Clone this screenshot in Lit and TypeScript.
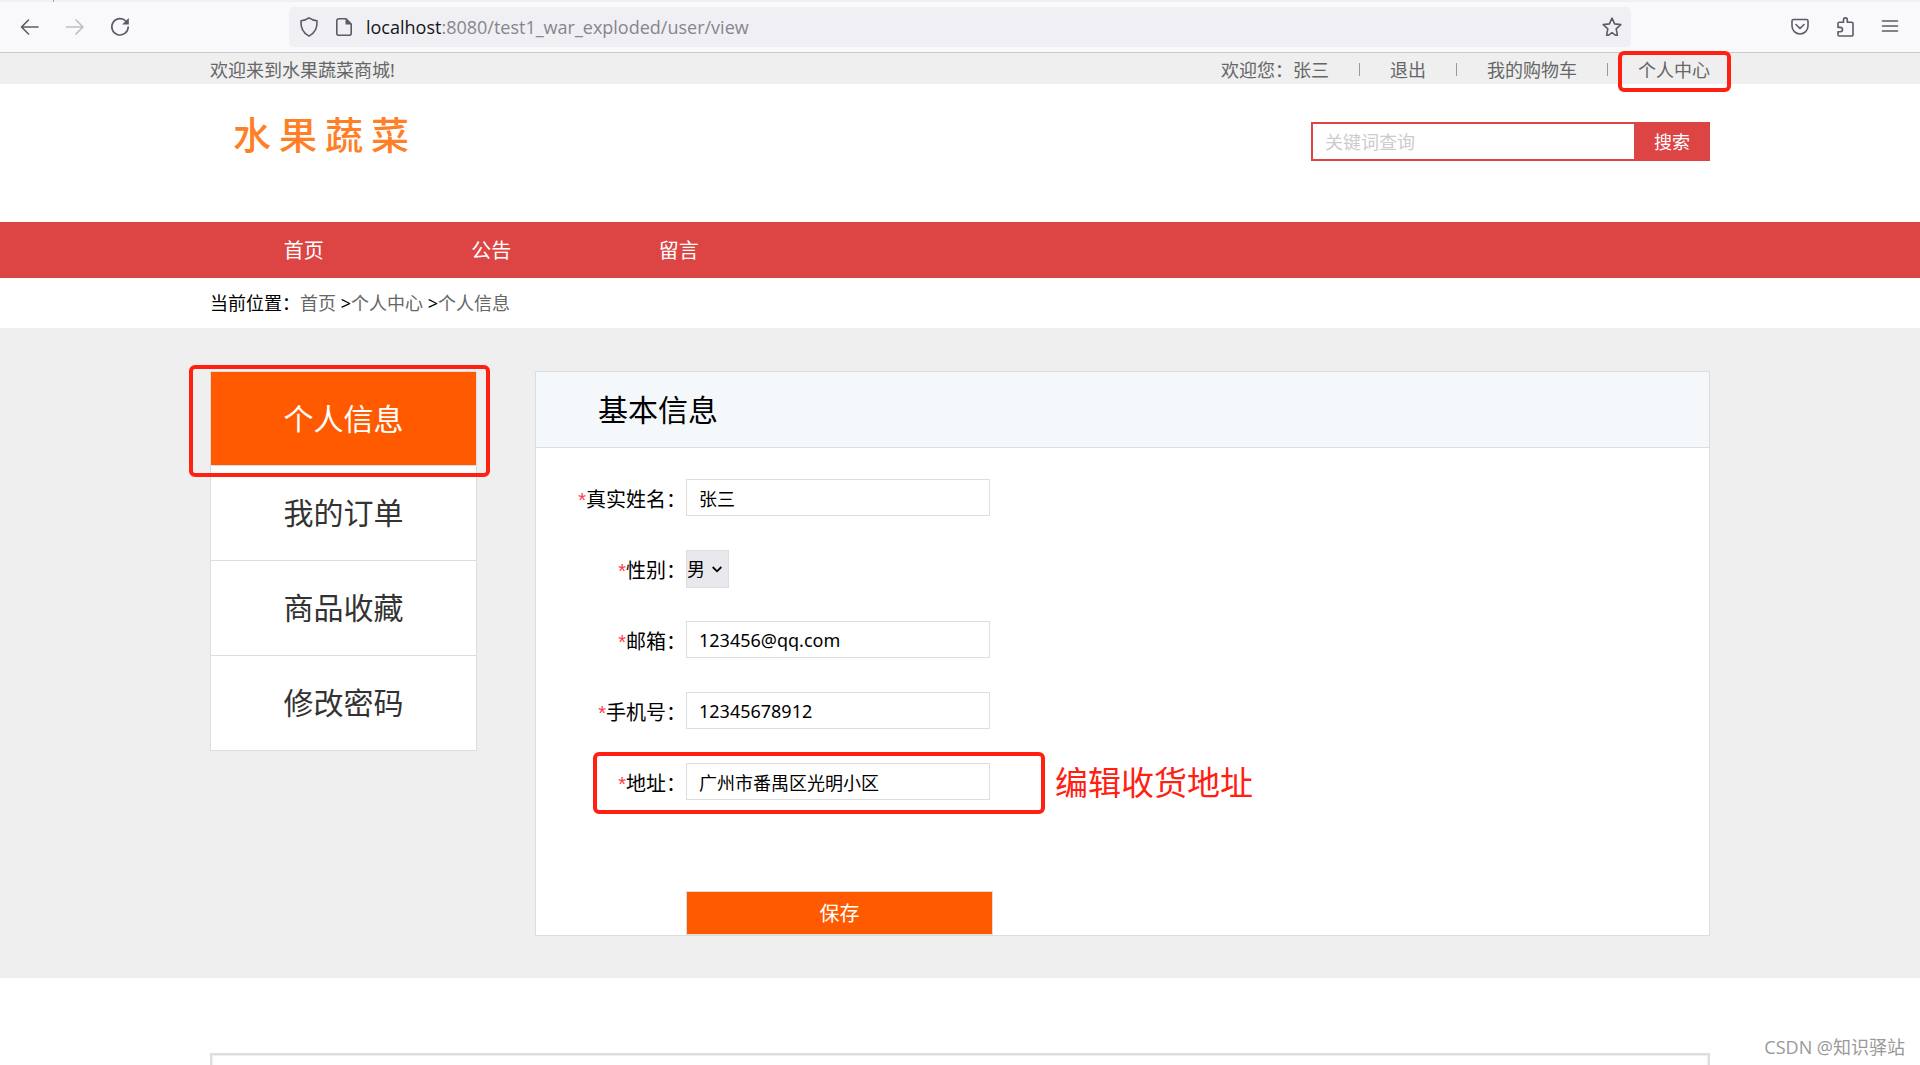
import { LitElement, html, css, svg } from "lit";
import { customElement, property } from "lit/decorators.js";
import { classMap } from "lit/directives/class-map.js";

const ICONS: Record<string, unknown> = {
  back: svg`<path d="M18 10H1.5M8.5 3L1.5 10l7 7"/>`,
  forward: svg`<path d="M1.500 10H18M11 3l7 7-7 7"/>`,
  reload: svg`<path d="M16 4.200A8.200 8.200 0 1 0 18.200 10"/><path class="solid" d="M18.800 1v6.600h-6.600z"/>`,
  shield: svg`<path d="M10 .9c2.300 1.700 5 2.600 8 2.800.400 6.300-1.200 11.800-8 15.400C3.200 15.500 1.600 10 2 3.700 5 3.500 7.700 2.600 10 .9z"/>`,
  page: svg`<path d="M12 1.800H4.800a2 2 0 0 0-2 2v12.400a2 2 0 0 0 2 2h10.400a2 2 0 0 0 2-2V7z"/><path class="solid" d="M11.500 1.500V7.500H17.500z"/>`,
  star: svg`<path d="M10 1.200l2.600 5.700 6.200.7-4.600 4.200 1.200 6.400-1.700.1L10 15.700l-3.700 2.600-1.700-.1 1.200-6.400-4.600-4.200 6.200-.7z"/>`,
  pocket: svg`<path d="M3.500 2.500h13a1.500 1.500 0 0 1 1.500 1.500v5a8 8 0 0 1-16 0V4a1.500 1.500 0 0 1 1.500-1.500z"/><path d="M6 7.500l4 4 4-4"/>`,
  extension: svg`<path d="M3 6.500a1.200 1.200 0 0 1 1.200-1.200H8.500V2.800a1.900 1.900 0 0 1 3.800 0V5.300h4.500A1.200 1.200 0 0 1 18 6.500v11.300a1.200 1.200 0 0 1-1.200 1.200H4.200A1.200 1.200 0 0 1 3 17.800V14.800h2.300a2.200 2.200 0 0 0 0-4.400H3z"/>`,
  menu: svg`<path d="M2.500 4h15M2.500 9h15M2.500 14h15"/>`,
};

@customElement("line-icon")
export class LineIcon extends LitElement {
  @property() name = "";

  static styles = css`
    :host {
      display: block;
      width: 20px;
      height: 20px;
    }
    .glyph {
      display: block;
      width: 100%;
      height: 100%;
      fill: none;
      stroke: currentColor;
      stroke-width: 1.6;
      stroke-linecap: round;
      stroke-linejoin: round;
      overflow: visible;
    }
    .solid {
      fill: currentColor;
      stroke: none;
    }
  `;

  render() {
    return html`<svg class="glyph" viewBox="0 0 20 20" aria-hidden="true">${ICONS[this.name]}</svg>`;
  }
}

@customElement("browser-bar")
export class BrowserBar extends LitElement {
  static styles = css`
    :host {
      display: block;
    }
    .bar {
      display: flex;
      align-items: center;
      box-sizing: border-box;
      height: 53px;
      padding: 2px 20px 0;
      background:
        linear-gradient(#a9a9ad, #a9a9ad) 53px 0 / 1px 2px no-repeat,
        linear-gradient(#f0f0f0, #f0f0f0) 0 0 / 100% 2px no-repeat,
        #f9f9fb;
      border-bottom: 1px solid #c9c9cd;
      color: #5b5b66;
    }
    .group {
      display: flex;
      gap: 25px;
    }
    .icon-button {
      display: block;
      padding: 0;
      border: 0;
      background: none;
      color: inherit;
      cursor: pointer;
    }
    .icon-button:disabled {
      color: #bdbdc3;
    }
    .address {
      display: flex;
      flex: 1;
      align-items: center;
      gap: 15px;
      height: 40px;
      margin: 0 159px;
      padding: 0 9px 0 10px;
      border-radius: 5px;
      background: #f0f0f4;
    }
    .url {
      flex: 1;
      margin-left: -3px;
      color: #86868d;
      font-family: "Open Sans", "Noto Sans", sans-serif;
      font-size: 18px;
      line-height: 24px;
    }
    .host {
      color: #15141a;
    }
  `;

  render() {
    return html`
      <div class="bar">
        <div class="group">
          <button class="icon-button" aria-label="后退"><line-icon name="back"></line-icon></button>
          <button class="icon-button" aria-label="前进" disabled><line-icon name="forward"></line-icon></button>
          <button class="icon-button" aria-label="刷新"><line-icon name="reload"></line-icon></button>
        </div>
        <div class="address">
          <line-icon name="shield"></line-icon>
          <line-icon name="page"></line-icon>
          <span class="url"><span class="host">localhost</span>:8080/test1_war_exploded/user/view</span>
          <button class="icon-button" aria-label="收藏"><line-icon name="star"></line-icon></button>
        </div>
        <div class="group">
          <button class="icon-button" aria-label="Pocket"><line-icon name="pocket"></line-icon></button>
          <button class="icon-button" aria-label="扩展"><line-icon name="extension"></line-icon></button>
          <button class="icon-button" aria-label="菜单"><line-icon name="menu"></line-icon></button>
        </div>
      </div>
    `;
  }
}

interface Field {
  id: string;
  label: string;
  value: string;
  options?: string[];
  note?: string;
}

const NAV = ["首页", "公告", "留言"];
const SIDE = ["个人信息", "我的订单", "商品收藏", "修改密码"];
const FIELDS: Field[] = [
  { id: "name", label: "真实姓名：", value: "张三" },
  { id: "gender", label: "性别：", value: "男", options: ["男", "女"] },
  { id: "email", label: "邮箱：", value: "123456@qq.com" },
  { id: "phone", label: "手机号：", value: "12345678912" },
  { id: "address", label: "地址：", value: "广州市番禺区光明小区", note: "编辑收货地址" },
];

@customElement("app-root")
export class AppRoot extends LitElement {
  static styles = css`
    :host {
      display: flex;
      flex-direction: column;
      position: relative;
      min-height: 100vh;
      background: #fff;
      color: #000;
      font-family: "Noto Sans", "Noto Sans CJK SC", sans-serif;
      font-size: 18px;
      line-height: 24px;
    }
    a {
      color: #666;
      text-decoration: none;
    }
    ul {
      margin: 0;
      padding: 0;
      list-style: none;
    }
    input,
    select,
    button {
      box-sizing: border-box;
      margin: 0;
      border-radius: 0;
      color: #000;
      font: inherit;
    }
    .wrap {
      width: min(1500px, 100% - 48px);
      margin: 0 auto;
    }
    .mark {
      position: absolute;
      border: 4px solid #ff2012;
      border-radius: 6px;
      pointer-events: none;
    }

    .topbar {
      background: #efefef;
      color: #666;
    }
    .topbar-row {
      display: flex;
      align-items: center;
      justify-content: space-between;
      box-sizing: border-box;
      height: 31px;
      padding-top: 2px;
    }
    .account {
      display: flex;
      align-items: center;
      gap: 30px;
    }
    .divider {
      width: 1px;
      height: 13px;
      background: #999;
    }
    .marked {
      position: relative;
    }
    .mark-center {
      inset: -7px -21px -10px -20px;
    }

    .header {
      display: flex;
      align-items: flex-start;
      justify-content: space-between;
      box-sizing: border-box;
      height: 138px;
      padding-top: 26px;
    }
    .logo {
      display: flex;
      gap: 8px;
      margin-left: 23px;
      color: #ff7f27;
      font-size: 38px;
      font-weight: 500;
      line-height: 48px;
    }
    .search {
      display: flex;
      width: 399px;
      height: 39px;
      margin-top: 12px;
    }
    .search-input {
      flex: 1;
      min-width: 0;
      padding: 0 12px;
      border: 2px solid #dd4545;
      border-right: 0;
      background: #fff;
      outline: 0;
    }
    .search-input::placeholder {
      color: #ccc;
      opacity: 1;
    }
    .search-button {
      width: 76px;
      padding: 0;
      border: 0;
      background: #dd4545;
      color: #fff;
    }

    .nav {
      background: #dd4545;
    }
    .nav-row {
      display: grid;
      grid-template-columns: repeat(8, 1fr);
    }
    .nav-link {
      display: block;
      padding-top: 2px;
      color: #fff;
      font-size: 20px;
      line-height: 54px;
      text-align: center;
    }
    .crumbs {
      line-height: 50px;
    }

    .body {
      padding: 43px 0 42px;
      background: #efefef;
    }
    .columns {
      display: flex;
      align-items: flex-start;
      gap: 58px;
    }
    .side {
      position: relative;
      flex: 0 0 267px;
      box-sizing: border-box;
      border: 1px solid #ddd;
      border-width: 1px 1px 0;
      background: #fff;
    }
    .side-link {
      display: block;
      border-bottom: 1px solid #ddd;
      color: #333;
      font-size: 30px;
      line-height: 94px;
      text-align: center;
    }
    .side-link.active {
      background: #ff5a00;
      color: #fff;
      line-height: 93px;
    }
    .mark-side {
      inset: -7px -14px auto -22px;
      height: 104px;
    }
    .panel {
      flex: 1;
      border: 1px solid #ddd;
      background: #fff;
    }
    .panel-title {
      margin: 0;
      padding-left: 62px;
      border-bottom: 1px solid #ddd;
      background: #f4f8fb;
      font-size: 30px;
      font-weight: 400;
      line-height: 75px;
    }
    .form {
      display: flex;
      flex-direction: column;
      gap: 34px;
      padding-top: 31px;
    }
    .row {
      position: relative;
      display: grid;
      grid-template-rows: 37px;
      grid-template-columns: 150px 304px 1fr;
    }
    .label {
      padding-top: 5px;
      font-size: 20px;
      line-height: 32px;
      text-align: right;
      white-space: nowrap;
    }
    .star {
      color: #ff3b4a;
      font-family: "Liberation Sans", sans-serif;
    }
    .text {
      width: 100%;
      height: 37px;
      padding: 0 12px;
      border: 1px solid #ddd;
      background: #fff;
      outline: 0;
    }
    .choice {
      position: relative;
      width: 43px;
    }
    .select {
      appearance: none;
      width: 100%;
      height: 38px;
      padding: 0;
      border: 1px solid #ddd;
      background: #e9e9ed;
    }
    .chevron {
      position: absolute;
      top: 16px;
      right: 7px;
      width: 10px;
      height: 7px;
      fill: none;
      stroke: #000;
      stroke-width: 1.8;
      pointer-events: none;
    }
    .mark-address {
      top: -11px;
      left: 57px;
      width: 444px;
      height: 54px;
    }
    .note {
      margin-left: 65px;
      color: #ff2012;
      font-size: 33px;
      line-height: 40px;
      white-space: nowrap;
    }
    .save {
      width: 307px;
      height: 44px;
      margin: 57px 0 0 150px;
      padding: 2px 0 0;
      border: 1px solid #ddd;
      background: #ff5a00;
      color: #fff;
      font-size: 20px;
    }
    .footer {
      display: flex;
      flex: 1;
      box-sizing: border-box;
      margin-top: 75px;
      border: 2px solid #ddd;
      border-bottom: 0;
      box-shadow: inset 1px 1px #efefef, inset -1px 0 #efefef;
    }
    .watermark {
      position: absolute;
      right: 15px;
      bottom: 6px;
      color: #999;
      font-family: "Open Sans", "Noto Sans CJK SC", sans-serif;
      text-shadow: -1px -1px #fff;
    }
  `;

  private renderControl(field: Field) {
    if (field.options) {
      return html`
        <div class="choice">
          <select class="select" id=${field.id}>
            ${field.options.map((o) => html`<option ?selected=${o === field.value}>${o}</option>`)}
          </select>
          <svg class="chevron" viewBox="0 0 10 7" aria-hidden="true"><path d="M.7 1L5 5.300 9.300 1" /></svg>
        </div>
      `;
    }
    return html`<input class="text" id=${field.id} type="text" .value=${field.value} />`;
  }

  render() {
    return html`
      <browser-bar></browser-bar>

      <div class="topbar">
        <div class="wrap topbar-row">
          <span>欢迎来到水果蔬菜商城!</span>
          <div class="account">
            <span>欢迎您：<a href="#user">张三</a></span>
            <span class="divider"></span>
            <a href="#logout">退出</a>
            <span class="divider"></span>
            <a href="#cart">我的购物车</a>
            <span class="divider"></span>
            <span class="marked"><a href="#center">个人中心</a><span class="mark mark-center"></span></span>
          </div>
        </div>
      </div>

      <header class="wrap header">
        <div class="logo">${[..."水果蔬菜"].map((c) => html`<span>${c}</span>`)}</div>
        <form class="search" @submit=${(e: Event) => e.preventDefault()}>
          <input class="search-input" type="text" placeholder="关键词查询" aria-label="关键词查询" />
          <button class="search-button">搜索</button>
        </form>
      </header>

      <nav class="nav">
        <div class="wrap nav-row">
          ${NAV.map((n) => html`<a class="nav-link" href="#nav">${n}</a>`)}
        </div>
      </nav>

      <div class="wrap crumbs">
        当前位置：<a href="#home">首页</a> &gt;<a href="#center">个人中心</a> &gt;<a href="#info">个人信息</a>
      </div>

      <main class="body">
        <div class="wrap columns">
          <aside class="side">
            <ul>
              ${SIDE.map(
                (s, i) =>
                  html`<li><a class=${classMap({ "side-link": true, active: i === 0 })} href="#side">${s}</a></li>`
              )}
            </ul>
            <span class="mark mark-side"></span>
          </aside>
          <section class="panel">
            <h2 class="panel-title">基本信息</h2>
            <form class="form" @submit=${(e: Event) => e.preventDefault()}>
              ${FIELDS.map(
                (f) => html`
                  <div class="row">
                    <label class="label" for=${f.id}><span class="star">*</span>${f.label}</label>
                    ${this.renderControl(f)}
                    ${f.note ? html`<span class="note">${f.note}</span><span class="mark mark-address"></span>` : ""}
                  </div>
                `
              )}
              <button class="save">保存</button>
            </form>
          </section>
        </div>
      </main>

      <footer class="wrap footer"></footer>
      <span class="watermark">CSDN @知识驿站</span>
    `;
  }
}
